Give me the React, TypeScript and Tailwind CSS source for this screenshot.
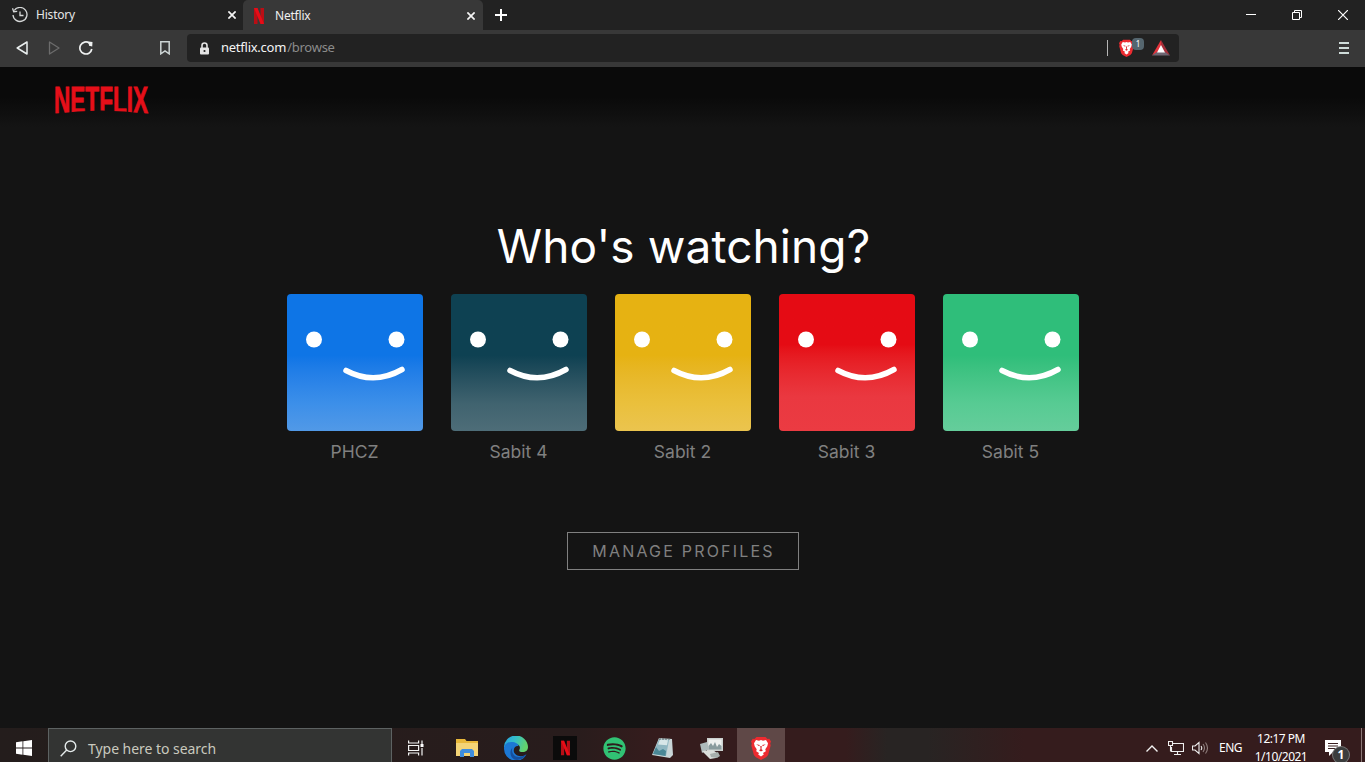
import React from "react"
import { FaSpotify } from "react-icons/fa"

const profiles = [
  { name: "PHCZ", color: "bg-linear-to-b from-[#0e75e6] from-45% via-[#3c8fe9] via-80% to-[#5199e7]" },
  { name: "Sabit 4", color: "bg-linear-to-b from-[#0e4152] from-45% via-[#40636f] via-80% to-[#4e6d78]" },
  { name: "Sabit 2", color: "bg-linear-to-b from-[#e6b212] from-45% via-[#eac03c] via-80% to-[#ebc44e]" },
  { name: "Sabit 3", color: "bg-linear-to-b from-[#e50b14] from-37% via-[#ea3840] via-75% to-[#eb3b42]" },
  { name: "Sabit 5", color: "bg-linear-to-b from-[#2fbe7a] from-45% via-[#57cb93] via-80% to-[#65cd9b]" },
]

function Lion({ className }: { className: string }) {
  return (
    <svg viewBox="0 0 20 24" className={className}>
      <path d="M5.500 1h9l2 2 1.800-.2L20 5.500l-.8 2 .5 2-2.600 9.500-2 2.200L10 24l-5.100-2.800-2-2.200L.3 9.500l.5-2L0 5.500l1.700-2.700L3.500 3z" fill="#ec2b30" />
      <path d="M5 4l3 .8L10 4l2 .8 3-.8 2 3.200-.7 3-2 3 .5 2L12 17l.8 1.500L10 20.500 7.200 18.500 8 17l-2.800-1.800.5-2-2-3L3 7.200z" fill="#fff" />
      <path d="M5.200 8.200l3.600.8-.6 1.300zM14.800 8.200L11.200 9l.6 1.300zM9.300 10h1.400l-.2 3.200 1.500 1L10 15.500l-2-1.300 1.500-1z" fill="#d9282d" />
    </svg>
  )
}

function CloseIcon() {
  return (
    <svg viewBox="0 0 8 8" className="size-2 shrink-0" stroke="#f4f4f4" strokeWidth="1.7">
      <path d="M.4.4l7.200 7.200M7.600.4L.4 7.600" />
    </svg>
  )
}

function TabBar() {
  return (
    <div className="flex h-[30px] shrink-0 bg-[#222222]">
      <div className="flex w-[243px] items-center pl-3 pr-[7px]">
        <svg viewBox="0 0 16 16" className="size-4" fill="none" stroke="#d6d8d8" strokeWidth="1.3">
          <path d="M2.200 3.500A7 7 0 1 1 1 8" />
          <path d="M.5 1.300l1.200 3.400 3.500-.4M8 4.500v4h3.500" />
        </svg>
        <span className="ml-2 flex-1 text-xs tracking-[-0.2px] text-[#e6e6e6]">History</span>
        <CloseIcon />
      </div>
      <div className="flex h-[31px] w-[240px] items-center rounded-t-[5px] bg-[#383838] pl-[11px] pr-2">
        <svg viewBox="0 0 10 16" className="h-4 w-[10px]">
          <path d="M0 0h3.500v16H0zM6.500 0H10v16H6.500z" fill="#b90e15" />
          <path d="M0 0h3.500L10 16H6.500z" fill="#e80c17" />
        </svg>
        <span className="ml-[11px] flex-1 text-xs tracking-[-0.2px] text-[#f0f0f0]">Netflix</span>
        <CloseIcon />
      </div>
      <div className="flex flex-1 items-center justify-between pl-3 pr-[17px]">
        <svg viewBox="0 0 12 12" className="size-3" stroke="#fff" strokeWidth="2">
          <path d="M6 0v12M0 6h12" />
        </svg>
        <div className="flex items-center gap-9">
          <svg viewBox="0 0 10 10" className="size-[10px]" stroke="#fff">
            <path d="M0 4.500h10" />
          </svg>
          <svg viewBox="0 0 10 10" className="size-[10px]" fill="none" stroke="#fff">
            <path d="M.5 2.500h7v7h-7zM2.500 2.500v-2h7v7h-2" />
          </svg>
          <svg viewBox="0 0 10 10" className="size-[10px]" stroke="#fff" strokeWidth="1.2">
            <path d="M0 0l10 10M10 0L0 10" />
          </svg>
        </div>
      </div>
    </div>
  )
}

function Toolbar() {
  return (
    <div className="flex h-[37px] shrink-0 items-center bg-[#383838] pb-px pl-4 pr-[16px]">
      <svg viewBox="0 0 12 14" className="h-[14px] w-3" fill="none" stroke="#e9eeee" strokeWidth="1.5" strokeLinejoin="round">
        <path d="M11 1v12L1.200 7z" />
      </svg>
      <svg viewBox="0 0 12 14" className="ml-5 h-[14px] w-3" fill="none" stroke="#6c6c6c" strokeWidth="1.3" strokeLinejoin="round">
        <path d="M1.500 1v12L11 7z" />
      </svg>
      <svg viewBox="0 0 14 14" className="ml-[19px] size-[14px]" fill="none" stroke="#eef0f0" strokeWidth="1.7">
        <path d="M12.800 8A6 6 0 1 1 10.500 2.200" />
        <path d="M9.500.5l4 .6-.3 4.300-3.200-.7z" fill="#eef0f0" stroke="none" />
      </svg>
      <svg viewBox="0 0 10 14" className="ml-[67px] h-[14px] w-[10px]" fill="none" stroke="#ccd4d4" strokeWidth="1.5">
        <path d="M.8.800h8.400v12L5 9.800.8 12.800z" />
      </svg>
      <div className="ml-[17px] flex h-7 w-[992px] items-center rounded-[4px] bg-[#222222] pl-3">
        <svg viewBox="0 0 11 13" className="h-[13px] w-[11px]">
          <path d="M3 6V3.500a2.500 2.500 0 0 1 5 0V6" fill="none" stroke="#e4e4e4" strokeWidth="1.6" />
          <rect x="1" y="5.500" width="9" height="7" rx="1" fill="#e4e4e4" />
          <circle cx="5.500" cy="9" r="1.100" fill="#222222" />
        </svg>
        <span className="ml-[11px] flex-1 text-[13px] tracking-[-0.25px] text-[#f4f4f4]">
          netflix.com<span className="pl-px text-[#8b8b8b]">/browse</span>
        </span>
        <div className="h-4 w-px bg-[#b5b5b5]" />
        <div className="relative ml-[11px]">
          <Lion className="h-[18px] w-[15px]" />
          <span className="absolute -right-2.5 -top-px flex size-3 items-center justify-center rounded-[4px] bg-[#55666f] text-[8px] leading-none text-white">
            1
          </span>
        </div>
        <svg viewBox="0 0 18 16" className="ml-[18px] mr-[9px] h-4 w-[18px]">
          <path d="M9 0L0 15.500l9-5z" fill="#e3343c" />
          <path d="M9 0l9 15.500-9-5z" fill="#a62f3a" />
          <path d="M0 15.500l5-3.500h8l5 3.500z" fill="#6e6672" />
          <path d="M9 5l4 7.500H5z" fill="#fff" />
        </svg>
      </div>
      <svg viewBox="0 0 10 12" className="ml-auto h-3 w-[10px]" stroke="#cfdcda" strokeWidth="2">
        <path d="M0 1h10M0 6h10M0 11h10" />
      </svg>
    </div>
  )
}

function Taskbar() {
  return (
    <div className="flex h-10 shrink-0 bg-[linear-gradient(to_right,#241d1c_0%,#281c1c_42%,#351c1d_48%,#351c1d_62%,#282423_65%,#282423_68%,#351c1d_75%)]">
      <div className="flex w-12 items-center justify-center">
        <svg viewBox="0 0 16 16" className="size-4" fill="#fff">
          <path d="M0 2.200L6.500 1.300v6.300H0zM7.300 1.200L16 0v7.600H7.300zM0 8.400h6.500v6.300L0 13.800zM7.300 8.400H16V16l-8.700-1.200z" />
        </svg>
      </div>
      <div className="flex w-[344px] items-center border border-[#5d6262] bg-[#333433] pl-[11px]">
        <svg viewBox="0 0 17 17" className="size-[17px]" fill="none" stroke="#e4eaea" strokeWidth="1.4">
          <circle cx="10.500" cy="6.300" r="5.300" />
          <path d="M6.700 10.100L.7 16.300" />
        </svg>
        <span className="ml-[11px] text-[14px] tracking-[-0.04px] text-[#c9c9be]">Type here to search</span>
      </div>
      <div className="flex items-center">
        <div className="flex w-12 justify-center">
          <svg viewBox="0 0 16 16" className="size-4" fill="none" stroke="#f3f3f3" strokeWidth="1.2">
            <path d="M.6.500v2.500h10V.500M.6 15.500V13h10v2.500M.6 5.500h10v5H.6zM14 .500v3.500M14 8v7.500" />
            <path d="M12.500 4h3v3h-3z" fill="#fff" stroke="none" />
          </svg>
        </div>
        <div className="ml-[3px] flex w-12 justify-center">
          <svg viewBox="0 0 22 18" className="h-[18px] w-[22px]">
            <path d="M0 0h9l1.500 2H22v15H0z" fill="#e8b83a" />
            <path d="M0 4h22v13H0z" fill="#f3d477" />
            <path d="M4 18v-6l2-2h10l2 2v6h-4v-4H8v4z" fill="#3e8ddd" />
          </svg>
        </div>
        <div className="ml-px flex w-12 justify-center">
          <svg viewBox="0 0 24 24" className="size-6">
            <defs>
              <linearGradient id="edgeTop" x1="0" y1="0" x2="1" y2="0.3">
                <stop offset="0" stopColor="#259fe6" />
                <stop offset=".5" stopColor="#35bfc8" />
                <stop offset="1" stopColor="#63d36c" />
              </linearGradient>
            </defs>
            <path d="M0 12A12 12 0 0 1 24 11c0 3-2 5-5.500 5-2.500 0-4-1-3-2.500 1.500-3-1-5.500-4-5.500C7 8 2 9 0 12z" fill="url(#edgeTop)" />
            <path d="M0 13c0-4 3-7 7.500-7 4 0 7 2 7 4-5-1-8 8 1 10 2.500.5 5 0 7-1.500A12 12 0 0 1 0 13z" fill="#1c78d4" />
            <path d="M8.500 11.500C7 15 9 21 15 21c3 0 6-1.500 7.500-3.200C20 23 15 24.500 11 23.800 6 21.500 5 15 8.500 11.500z" fill="#154f9e" />
          </svg>
        </div>
        <div className="ml-px flex w-12 justify-center">
          <div className="flex size-6 items-center justify-center bg-[#0b0b0b]">
            <svg viewBox="0 0 10 16" className="h-4 w-[9px]">
              <path d="M0 0h3.500v16H0zM6.500 0H10v16H6.500z" fill="#b40f16" />
              <path d="M0 0h3.500L10 16H6.500z" fill="#e80c17" />
            </svg>
          </div>
        </div>
        <div className="ml-px flex w-12 justify-center">
          <FaSpotify className="size-[23px] text-[#31c274]" />
        </div>
        <div className="ml-px flex w-12 justify-center">
          <svg viewBox="0 0 22 22" className="size-[22px]">
            <path d="M7 1l13 1 1 16-3 3L0 18z" fill="#c9d6d8" />
            <path d="M7 2l10 1-3 16L1 17z" fill="#8fb6c1" />
            <path d="M8 2.500l8 .8-1 5-9-.8z" fill="#d7e6e8" />
            <path d="M1 17l3-7 3 4 4-2 3 2-.5 5z" fill="#4a8796" />
            <path d="M8 1v2M11 1v2M14 1v2M17 1v2" stroke="#566" />
          </svg>
        </div>
        <div className="ml-px flex w-12 justify-center">
          <svg viewBox="0 0 24 22" className="h-[22px] w-6">
            <path d="M7 1h16v13H7z" fill="#cbd1cf" />
            <path d="M8.500 2.500h13v9h-13z" fill="#eef1ef" />
            <path d="M8.500 9l2.500-3 2 3 2-4 2 5 2-3 2.500 2v3.500h-13z" fill="#899c9e" />
            <path d="M0 7l7-2 2 7-7 4z" fill="#aebbbc" />
            <path d="M2 14l11-1 4 3-1 5-6 1-4-4z" fill="#dadedb" />
            <path d="M10 17l8-2 2 4-3 2-6-1z" fill="#a7afad" />
          </svg>
        </div>
        <div className="ml-px flex h-10 w-12 items-center justify-center bg-[#5f4847]">
          <Lion className="h-6 w-[20px]" />
        </div>
      </div>
      <div className="ml-auto flex items-center">
        <svg viewBox="0 0 12 7" className="h-[7px] w-3" fill="none" stroke="#f3f3f3" strokeWidth="1.4">
          <path d="M.5 6.500L6 1l5.500 5.500" />
        </svg>
        <svg viewBox="0 0 16 14" className="ml-[10px] h-[14px] w-4" fill="none" stroke="#eee" strokeWidth="1.1">
          <path d="M5 2.500h10.500v8H3.500V6M9.500 10.500v3M6 13.500h7M.5.500h4v4h-4zM2.500 4.500v6" />
        </svg>
        <svg viewBox="0 0 17 14" className="ml-2 h-[14px] w-[17px]" fill="none" stroke="#eee" strokeWidth="1.1">
          <path d="M.5 5h2.500l4-3.500v11L3 9H.5zM9 5q1.500 2 0 4" />
          <path d="M11 3q3 4 0 8M13.500 1.500q4 5.500 0 11" stroke="#91807f" />
        </svg>
        <span className="ml-[10px] w-6 text-xs tracking-[-0.5px] text-white">ENG</span>
        <div className="ml-2 w-[60px] whitespace-nowrap text-center text-xs leading-[18px] tracking-[-0.5px] text-white">
          <div>12:17 PM</div>
          <div>1/10/2021</div>
        </div>
        <div className="relative ml-[14px] mr-[20px] size-4">
          <svg viewBox="0 0 16 16" className="size-4">
            <path d="M0 0h16v12H8l-4 4v-4H0z" fill="#fff" />
            <path d="M3 3.500h10M3 6h10M3 8.500h7" stroke="#3a2021" />
          </svg>
          <span className="absolute left-2 top-[7px] flex size-4 items-center justify-center rounded-full bg-[#3b3d3d] text-[12px] font-bold text-white ring-1 ring-[#777]">
            1
          </span>
        </div>
        <div className="mr-[3px] h-10 w-px bg-[#8b7776]" />
      </div>
    </div>
  )
}

export default function App() {
  return (
    <div className="flex h-[762px] w-[1365px] flex-col overflow-hidden bg-[#141414] font-['Noto_Sans',sans-serif]">
      <TabBar />
      <Toolbar />
      <main className="h-[661px] shrink-0 font-['Inter',sans-serif]">
        <div className="h-[60px] bg-linear-to-b from-[#0a0a0a] from-50% to-[#141414] pl-[54px] pt-[16px]">
          {/* the wordmark's lower edge is a shallow arc */}
          <span className="block w-[156px] origin-left scale-x-[0.627] font-['Liberation_Sans',sans-serif] text-[36px] font-bold leading-9 text-[#e50f19] [-webkit-text-stroke:0.8px_#e50f19] [clip-path:path('M0_0H156V31H150Q75_24_0_31Z')]">
            NETFLIX
          </span>
        </div>
        <div className="flex flex-col items-center">
          <h1 className="mt-[90px] pl-0.5 text-[46px] leading-[58px] tracking-[0.1px] text-white">Who&apos;s watching?</h1>
          <div className="mt-[19px] flex gap-7">
            {profiles.map((profile) => (
              <div key={profile.name} className="w-[136px]">
                <div className={`h-[137px] rounded-[4px] ${profile.color}`}>
                  <svg viewBox="0 0 136 137" className="h-[137px] w-[136px]" fill="#fff">
                    <circle cx="27" cy="45.500" r="8" />
                    <circle cx="109.500" cy="45.500" r="8" />
                    <path d="M59 76.500q28 15 56-1" fill="none" stroke="#fff" strokeWidth="5.500" strokeLinecap="round" />
                  </svg>
                </div>
                <p className="mt-[9px] text-center text-[17.5px] leading-6 text-[#808080]">{profile.name}</p>
              </div>
            ))}
          </div>
          <button className="mt-[68px] h-[38px] w-[232px] border border-[#808080] pl-0.5 text-[16px] tracking-[2.2px] text-[#808080]">
            MANAGE PROFILES
          </button>
        </div>
      </main>
      <Taskbar />
    </div>
  )
}
